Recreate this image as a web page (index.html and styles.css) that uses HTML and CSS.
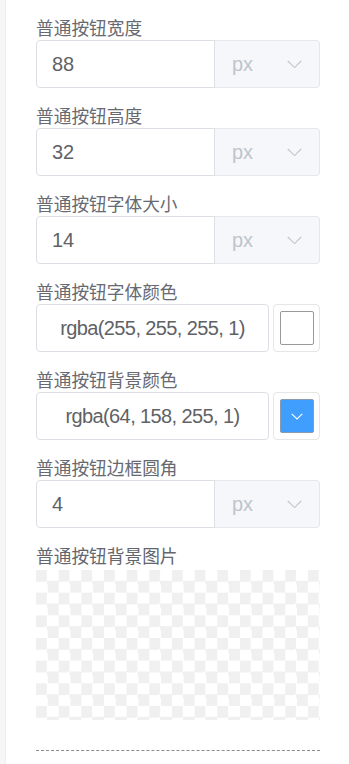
FILE: index.html
```html
<!DOCTYPE html>
<html lang="zh-CN">
<head>
<meta charset="utf-8">
<title>按钮设置</title>
<link rel="stylesheet" href="styles.css">
</head>
<body>
<div class="page">
  <div class="strip"></div>
  <div class="panel">
    <div class="item">
      <div class="label">普通按钮宽度</div>
      <div class="group">
        <div class="field">88</div>
        <div class="unit"><span>px</span><svg class="chev" width="15" height="9" viewBox="0 0 15 9"><path d="M0.8 1 L7.5 7.6 L14.2 1" fill="none" stroke="#c0c4cc" stroke-width="1.1"/></svg></div>
      </div>
    </div>
    <div class="item">
      <div class="label">普通按钮高度</div>
      <div class="group">
        <div class="field">32</div>
        <div class="unit"><span>px</span><svg class="chev" width="15" height="9" viewBox="0 0 15 9"><path d="M0.8 1 L7.5 7.6 L14.2 1" fill="none" stroke="#c0c4cc" stroke-width="1.1"/></svg></div>
      </div>
    </div>
    <div class="item">
      <div class="label">普通按钮字体大小</div>
      <div class="group">
        <div class="field">14</div>
        <div class="unit"><span>px</span><svg class="chev" width="15" height="9" viewBox="0 0 15 9"><path d="M0.8 1 L7.5 7.6 L14.2 1" fill="none" stroke="#c0c4cc" stroke-width="1.1"/></svg></div>
      </div>
    </div>
    <div class="item">
      <div class="label">普通按钮字体颜色</div>
      <div class="color-group">
        <div class="color-text">rgba(255, 255, 255, 1)</div>
        <div class="picker"><div class="swatch swatch-white"></div></div>
      </div>
    </div>
    <div class="item">
      <div class="label">普通按钮背景颜色</div>
      <div class="color-group">
        <div class="color-text">rgba(64, 158, 255, 1)</div>
        <div class="picker"><div class="swatch swatch-blue"><svg width="12" height="7" viewBox="0 0 12 7"><path d="M0.7 0.8 L6 6 L11.3 0.8" fill="none" stroke="#ffffff" stroke-width="1.1"/></svg></div></div>
      </div>
    </div>
    <div class="item">
      <div class="label">普通按钮边框圆角</div>
      <div class="group">
        <div class="field">4</div>
        <div class="unit"><span>px</span><svg class="chev" width="15" height="9" viewBox="0 0 15 9"><path d="M0.8 1 L7.5 7.6 L14.2 1" fill="none" stroke="#c0c4cc" stroke-width="1.1"/></svg></div>
      </div>
    </div>
    <div class="item item-image">
      <div class="label label-dark">普通按钮背景图片</div>
      <div class="checker"></div>
    </div>
    <div class="divider"></div>
  </div>
</div>
</body>
</html>
```

FILE: styles.css
```css
html, body {
  margin: 0;
  padding: 0;
  background: #ffffff;
}

body {
  font-family: "Liberation Sans", "Noto Sans CJK SC", sans-serif;
  overflow: hidden;
}

.page {
  display: flex;
  min-height: 764px;
}

.strip {
  width: 5px;
  flex: none;
  background: #f6f6f6;
  border-right: 1px solid #eeeeee;
}

.panel {
  width: 284px;
  padding: 15px 0 0 30px;
}

.item {
  margin-bottom: 15px;
}

.label {
  font-family: "Noto Sans CJK SC", sans-serif;
  font-size: 17.7px;
  line-height: 25px;
  height: 25px;
  color: #676a71;
  white-space: nowrap;
}

.label-dark {
  color: #63666d;
}

.group {
  display: flex;
  height: 48px;
}

.field {
  width: 179px;
  box-sizing: border-box;
  border: 1px solid #dcdfe6;
  border-radius: 4px 0 0 4px;
  padding: 0 15px;
  display: flex;
  align-items: center;
  font-size: 20px;
  color: #606266;
  background: #ffffff;
}

.unit {
  width: 105px;
  box-sizing: border-box;
  border: 1px solid #e4e7ed;
  border-left: none;
  border-radius: 0 4px 4px 0;
  background: #f5f7fa;
  display: flex;
  align-items: center;
  justify-content: space-between;
  padding: 0 17px 0 17px;
  font-size: 20px;
  color: #c0c4cc;
}

.chev {
  display: block;
  margin-top: 1px;
}

.color-group {
  display: flex;
  height: 48px;
  gap: 4px;
}

.color-text {
  flex: 1;
  box-sizing: border-box;
  border: 1px solid #dcdfe6;
  border-radius: 4px;
  display: flex;
  align-items: center;
  justify-content: center;
  font-size: 20px;
  letter-spacing: -0.6px;
  color: #606266;
}

.picker {
  width: 47px;
  box-sizing: border-box;
  border: 1px solid #e6e6e6;
  border-radius: 4px;
  display: flex;
  align-items: center;
  justify-content: center;
}

.swatch {
  width: 34px;
  height: 34px;
  box-sizing: border-box;
  border: 1px solid #999999;
  border-radius: 2px;
  display: flex;
  align-items: center;
  justify-content: center;
}

.swatch-white {
  background: #ffffff;
}

.swatch-blue {
  background: #409eff;
  border-color: #8a9bb0;
}

.item-image {
  margin-bottom: 0;
}

.checker {
  margin-top: 2px;
  height: 150px;
  background-color: #ffffff;
  background-image: conic-gradient(#ffffff 25%, #f0f0f0 0 50%, #ffffff 0 75%, #f0f0f0 0);
  background-size: 22.66px 22.66px;
}

.divider {
  margin-top: 30px;
  border-top: 1px dashed #8c8c8c;
}
```
